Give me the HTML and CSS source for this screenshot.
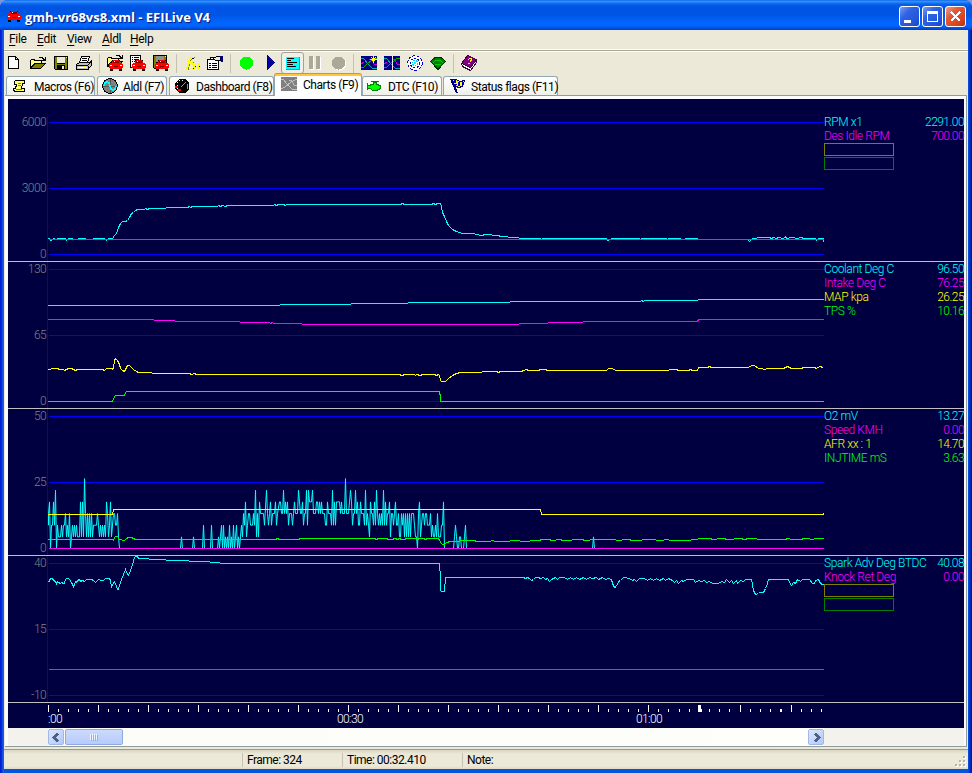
FILE: index.html
```
<!DOCTYPE html>
<html lang="en">
<head>
    <meta charset="UTF-8">
    <title>gmh-vr68vs8.xml - EFILive V4</title>
    <link rel="stylesheet" href="styles.css">
</head>
<body>

<svg class="defs" width="0" height="0">
    <symbol id="car" viewBox="0 0 14 11">
        <path fill="#000" d="M1 8h3v3h-3zM10 8h3v3h-3zM3 0h8v1h-8z"/>
        <path fill="#f00" d="M4 0h6v1h1v2h2v1h1v4h-1v1h-12v-1h-1v-4h1v-1h2v-2h1z"/>
        <path fill="#800000" d="M4 1h6v2h-6zM5 6h4v1h-4z"/>
        <path fill="#fff" d="M1 5h2v1h-2zM11 5h2v1h-2zM5 1h1v1h-1z"/>
    </symbol>
    <symbol id="folder" viewBox="0 0 16 16">
        <path fill="#000" d="M9 2h4v1h1v1h1v-2h1v4h-4v-1h1v-1h-1v-1h-3zM1 4h4v1h7v3h4v1h-1v1h-1v1h-1v1h-1v1h-1v1h-11v-9h1z"/>
        <path fill="#ffff80" d="M1 5h3v1h7v2h-7l-3 4z"/>
        <path fill="#808000" d="M5 9h9l-4 4h-9z"/>
    </symbol>
    <symbol id="disk" viewBox="0 0 16 16">
        <path fill="#000" d="M1 1h14v14h-13l-1-1z"/>
        <path fill="#808000" d="M2 2h2v7h8v-7h2v12h-12z"/>
        <path fill="#ece9d8" d="M4 2h8v6h-8zM13 2h1v1h-1z"/>
        <path fill="#000" d="M4 10h8v4h-8z"/>
        <path fill="#ece9d8" d="M9 11h2v3h-2z"/>
    </symbol>
    <symbol id="graph" viewBox="0 0 16 14">
        <path fill="#000080" d="M0 0h16v14h-16z"/>
        <path fill="none" stroke="#0aa" d="M0 2h2l2 2 2 3 3 3 2 2h5"/>
        <path fill="none" stroke="#0a0" d="M0 12l3-1 3-3 4-3 3-3 3 0"/>
        <path fill="none" stroke="#c0c" d="M8 3l3 1 2 4 3 1M0 8l3-2"/>
    </symbol>
</svg>

<div class="window">
    <div class="titlebar">
        <svg class="title-icon" width="14" height="11"><use href="#car"/></svg>
        <span class="title-text">gmh-vr68vs8.xml - EFILive V4</span>
        <div class="winbtn"><svg width="19" height="19"><path fill="#fff" d="M4 13h7v3H4z"/></svg></div>
        <div class="winbtn"><svg width="19" height="19"><path fill="#fff" fill-rule="evenodd" d="M4 4h11v11H4zM5 7h9v7H5z"/></svg></div>
        <div class="winbtn close"><svg width="19" height="19"><path stroke="#fff" stroke-width="2.3" d="M5 5l9 9M14 5l-9 9"/></svg></div>
    </div>

    <div class="client">
        <div class="menubar">
            <span class="m-file"><u>F</u>ile</span>
            <span class="m-edit"><u>E</u>dit</span>
            <span class="m-view"><u>V</u>iew</span>
            <span class="m-aldl"><u>A</u>ldl</span>
            <span class="m-help"><u>H</u>elp</span>
        </div>

        <div class="toolbar">
            <div class="tool"><svg width="16" height="16"><path fill="#fff" stroke="#000" d="M1.500 1.500h7l3 3v9h-10zM8.500 1.500v3h3"/></svg></div>
            <div class="tool"><svg width="16" height="16"><use href="#folder"/></svg></div>
            <div class="tool"><svg width="16" height="16"><use href="#disk"/></svg></div>
            <div class="tool"><svg width="16" height="16"><path fill="#fff" stroke="#000" d="M5.500 1.500h8l-2 6h-8z"/><path stroke="#000" d="M6 3.500h5M6 5.500h5"/><path fill="#c0c0c0" stroke="#000" d="M3.500 7.500h10l2-2v5l-4 4h-11v-5z"/><path stroke="#000" d="M1 10.500h11M12 10.500v4M12 10l3-3"/><path stroke="#fff" d="M2 12.500h9"/><path stroke="#ff0" d="M8 11.500h2"/></svg></div>
            <i class="sep"></i>
            <div class="tool"><svg width="16" height="16"><use href="#folder" y="-2" width="16" height="16"/><use href="#car" x="2" y="5" width="14" height="11"/></svg></div>
            <div class="tool"><svg width="16" height="16"><path fill="#fff" stroke="#000" d="M.5.5h10v12h-10z"/><path stroke="#000" d="M2 2.500h1M4 2.500h5M2 4.500h1M4 4.500h5M2 6.500h1M4 6.500h5"/><use href="#car" x="2" y="5" width="14" height="11"/></svg></div>
            <div class="tool"><svg width="16" height="16"><g transform="translate(-1 -1)"><use href="#disk" width="16" height="16"/></g><path fill="#909090" d="M3 1h8v6H3z"/><use href="#car" x="2" y="5" width="14" height="11"/></svg></div>
            <i class="sep"></i>
            <div class="tool"><svg width="16" height="16"><path fill="none" stroke="#808000" d="M2 14.500h2l3-10 2-2h2M5 7.500h5"/><path fill="none" stroke="#ff0" stroke-width="2" d="M2 13.500h1l3-10 2-1h2M4 7h5M9 9l2 5M11 9l-2 5M13 9h2l-1 3 1 1h-2"/><path stroke="#000" d="M8 3.500h2M11 11.500h1M15 11.500h1M9 13.500h1"/></svg></div>
            <div class="tool"><svg width="16" height="16"><path fill="#fff" stroke="#000" d="M.5 4.500h11v10H.5zM3.500 2.500h4v2h-4z"/><path stroke="#000" d="M2 8.500h2M5 8.500h5M2 10.500h2M5 10.500h5M2 12.500h2M5 12.500h5"/><path fill="#ece9d8" stroke="#000" d="M6.500 3.500l3-2h4v4h-5z"/><path fill="#000080" d="M13 1h3v6h-2z"/></svg></div>
            <i class="sep"></i>
            <div class="tool"><svg width="16" height="16"><circle cx="8.500" cy="8" r="6.500" fill="#0f0"/></svg></div>
            <div class="tool"><svg width="16" height="16"><path fill="#00f" stroke="#000080" d="M6.500.5v14l7-7z"/><path fill="#0000a0" d="M7 2v11l5-5.500z"/></svg></div>
            <div class="tool pressed"><svg width="16" height="16"><path fill="#0ff" d="M2 2h13v12H2z"/><path fill="none" stroke="#808080" d="M2 14.500h13.500V2"/><path stroke="#000" d="M3 3.500h7M3 5.500h4M3 7.500h10M3 9.500h6M3 11.500h9"/></svg></div>
            <div class="tool"><svg width="16" height="16"><path fill="#fff" d="M3 2h4v13H3zM10 2h4v13h-4z"/><path fill="#aca899" d="M2 1h4v13H2zM9 1h4v13H9z"/></svg></div>
            <div class="tool"><svg width="16" height="16"><circle cx="9.500" cy="9" r="6.500" fill="#fff"/><circle cx="8.500" cy="8" r="6.500" fill="#aca899"/></svg></div>
            <i class="sep"></i>
            <div class="tool"><svg width="16" height="16"><use href="#graph" y="1" width="16" height="14"/><path stroke="#ff0" d="M12.500 1v7M9 4.500h7M10.500 2.500l4 4M14.500 2.500l-4 4"/><path fill="#fff" d="M12 4h1v1h-1z"/></svg></div>
            <div class="tool"><svg width="16" height="16"><use href="#graph" y="1" width="16" height="14"/><path stroke="#ece9d8" d="M8.500 1v14"/></svg></div>
            <div class="tool"><svg width="16" height="16"><g fill="none" stroke="#0000c0"><circle cx="8" cy="8" r="7.300" fill="#fff" stroke-dasharray="3 1.500"/><circle cx="8" cy="8" r="4.800" stroke-dasharray="2 1.500"/><circle cx="8" cy="8" r="2.500" stroke="#0cf" stroke-dasharray="1.500 1"/></g><path fill="#0ff" d="M7 7h2v2H7z"/></svg></div>
            <div class="tool"><svg width="16" height="16"><path fill="#008000" stroke="#003000" d="M.5 6.500l3-3 3-1.500h3l3 1.500 3 3-7.500 8z"/><path fill="none" stroke="#0c0" d="M3 7.500l3-2h4l3 2M5.500 10l2-1h1l2 1"/></svg></div>
            <i class="sep"></i>
            <div class="tool"><svg width="16" height="16"><path fill="#800080" stroke="#400040" d="M6.500.5l9 4-6 8-9-4z"/><path fill="#fff" stroke="#400040" d="M.5 8.500l9 4 6-8v3l-6 8-8-4z"/><path fill="none" stroke="#ff0" stroke-width="1.200" d="M7 5l2-2 2 1-2 3M8 8v1"/></svg></div>
        </div>

        <div class="tabs">
            <div class="tab t-macros"><svg width="16" height="16"><path fill="#ffff60" stroke="#000" d="M3.500 2.500h9v3h-2l-1 5h3v3h-9l-2-1v-2h2l1-4h-2v-3z"/><path stroke="#808000" d="M6 5.500h3M6 7.500h3M4 11.500h6"/></svg><span>Macros (F6)</span></div>
            <div class="tab t-aldl"><svg width="16" height="16"><circle cx="8" cy="8" r="7.300" fill="#808080" stroke="#000"/><path stroke="#555" d="M1 8h14M8 1v14"/><path fill="none" stroke="#0ff" stroke-width="1.400" d="M2 8l1-3 2-1 2 1 2 6 2 1 2-1 1-3"/></svg><span>Aldl (F7)</span></div>
            <div class="tab t-dash"><svg width="16" height="16"><path fill="#000" d="M5 1h6l4 4v6l-4 4H5l-4-4V5z"/><path fill="none" stroke="#fff" stroke-dasharray="1 2" d="M3 11V5l3-3h4"/><path fill="none" stroke="#0f0" d="M12 4L7 9M13 6v5"/><path stroke="#f00" stroke-width="2" d="M1 9h3M4 12h3"/></svg><span>Dashboard (F8)</span></div>
            <div class="tab t-charts active"><svg width="16" height="16"><path fill="#808080" d="M0 0h16v14H0z"/><path fill="none" stroke="#c0c0c0" d="M0 2h2l4 5 5 5h5M0 12l4-2 6-5 6-3M8 3l3 1 2 4 3 1"/></svg><span>Charts (F9)</span></div>
            <div class="tab t-dtc"><svg width="16" height="16"><path fill="#0f0" stroke="#008000" d="M4.500 6.500h3v-2h3v2l4 1v3l-4 2h-4l-2-2h-3v-3h3z"/><path stroke="#008000" d="M5 3.500h8M1.500 5v7"/></svg><span>DTC (F10)</span></div>
            <div class="tab t-flags"><svg width="16" height="16"><path fill="#ff0" stroke="#000080" d="M2.500 1.500h4l3 2 5-1-2 6-4 1-4-2z"/><path fill="#0000c0" d="M4 2h2v3H4zM8 4h2v4H8zM12 3h1v4h-1zM5 6h2v1H5z"/><path stroke="#000080" stroke-width="2" d="M1 1l6 14"/></svg><span>Status flags (F11)</span></div>
        </div>

        <div class="page">
            <!-- RPM -->
            <div class="panel first">
                <svg class="plot" width="816" height="162" viewBox="8 99 816 162">
                    <g transform="translate(.5 .5)">
                        <path class="axis" d="M47 115V261"/>
                        <path class="grid" d="M48 122H824M48 188H824M48 254H824"/>
                        <polyline class="cyan" points="47.500,238 49,238 50,240 52,239 53,238 56,239 58,238 65,238 66,240 68,238 77,239 79,238 91,239 94,238 104,238 106,240 108,238 112,238 114,235 116,233 118,227 120,223 122,221 125,221 127,220 129,217 131,213 133,212 135,210 137,209 144,209 145,208 147,209 149,208 165,208 166,207 187,207 189,206 190,207 192,206 195,206 196,206 217,206 218,205 220,206 222,205 225,206 227,205 237,205 238,205 273,205 274,204 276,205 278,204 283,204 285,205 286,204 400,204 402,203 404,204 431,204 433,203 435,204 437,203 440,203 441,206 442,212 444,216 446,221 448,225 450,227 452,229 456,231 462,233 474,233 475,234 482,235 484,234 498,235 500,236 507,236 508,237 518,237 519,238 540,238 541,239 543,238 606,238 607,240 609,239 612,238 638,238 640,239 642,238 665,238 667,239 669,238 678,238 683,239 687,238 697,238 698,239 747,239 748,240 749,241 750,240 751,239 753,238 756,238 757,237 769,237 771,238 773,237 776,238 778,237 783,238 785,236 786,238 791,237 797,238 800,237 804,238 815,238 816,240 818,238 823,238 823,241"/>
                        <path class="magenta" d="M48 239H824"/>
                    </g>
                    <g class="scale"><text x="46" y="126">6000</text><text x="46" y="192">3000</text><text x="46" y="258">0</text></g>
                </svg>
                <div class="legend">
                    <div class="row c-cyan"><span>RPM x1</span><b>2291.00</b></div>
                    <div class="row c-magenta"><span>Des Idle RPM</span><b>700.00</b></div>
                    <div class="slot olive"></div>
                    <div class="slot green"></div>
                </div>
            </div>
            <!-- temperatures, MAP, TPS -->
            <div class="panel">
                <svg class="plot" width="816" height="146" viewBox="8 262 816 146">
                    <g transform="translate(.5 .5)">
                        <path class="axis" d="M47 261V408"/>
                        <path class="grid" d="M48 269H824M48 335H824M48 401H824"/>
                        <polyline class="cyan" points="47.500,305 279,305 280,304 350,304 351,303 407,303 408,302 509,302 510,301 640,301 641,300 643,301 644,300 697,300 698,299 823.500,299"/>
                        <polyline class="magenta" points="47.500,319 153,319 154,320 174,320 175,321 239,321 240,322 269,322 270,323 272,322 273,323 301,323 302,324 518,324 519,323 547,323 548,322 582,322 583,321 697,321 698,319 823.500,319"/>
                        <polyline class="yellow" points="47.500,369 50,369 51,368 57,368 59,369 63,369 64,370 66,369 68,368 71,368 73,369 75,370 77,369 102,369 104,370 106,368 111,368 112,369 113,367 114,360 115,358 117,360 119,364 120,368 122,370 124,371 126,367 127,365 129,365 131,367 133,369 136,371 138,372 151,372 152,373 189,373 191,374 194,373 196,374 399,374 401,375 405,374 414,374 415,375 416,374 420,375 422,374 434,374 436,375 438,374 439,375 440,380 441,381 445,381 448,378 452,375 456,373 460,372 481,372 482,371 496,371 498,372 500,371 521,371 523,370 526,369 528,370 538,370 540,369 545,369 547,370 606,370 608,368 612,368 615,370 667,370 670,369 676,369 678,370 688,370 690,369 692,370 697,370 698,367 707,367 709,366 711,367 748,367 751,365 754,365 758,368 761,368 764,369 767,368 783,368 787,366 791,368 801,368 803,367 814,367 816,368 819,366 823,367"/>
                        <polyline class="lime" points="47.500,401 112,401 113,398 115,395 124,395 125,392 126,391 439,391 440,397 440,401 823.500,401"/>
                    </g>
                    <g class="scale"><text x="46" y="273">130</text><text x="46" y="339">65</text><text x="46" y="405">0</text></g>
                </svg>
                <div class="legend">
                    <div class="row c-cyan"><span>Coolant Deg C</span><b>96.50</b></div>
                    <div class="row c-magenta"><span>Intake Deg C</span><b>76.25</b></div>
                    <div class="row c-yellow"><span>MAP kpa</span><b>26.25</b></div>
                    <div class="row c-lime"><span>TPS %</span><b>10.16</b></div>
                </div>
            </div>
            <!-- O2, speed, AFR, injector time -->
            <div class="panel">
                <svg class="plot" width="816" height="146" viewBox="8 409 816 146">
                    <g transform="translate(.5 .5)">
                        <path class="axis" d="M47 408V555"/>
                        <path class="grid" d="M48 416H824M48 482H824M48 548H824"/>
                        <!-- O2 is quantised, so y is the step number here -->
                        <polyline class="cyan" transform="translate(0 548) scale(1 -11.65)" points="48,2 48,3 49,4 50,0 51,2 52,2 53,4 54,2 55,5 56,0 57,2 58,1 60,1 61,2 62,1 63,2 64,2 65,3 66,1 67,2 68,1 69,3 70,0 71,1 72,2 73,1 74,2 75,1 76,2 77,1 79,1 80,4 81,1 82,4 83,1 84,6 85,3 86,1 87,3 88,1 89,3 90,1 91,3 92,1 93,2 96,2 97,3 98,2 99,1 100,2 101,1 102,2 103,1 104,2 105,1 106,4 107,3 108,1 109,2 110,4 111,1 113,3 114,3 115,2 116,2 117,3 118,1 119,0 180,0 181,1 182,0 192,0 193,1 194,0 202,0 203,2 204,0 210,0 211,2 212,0 217,0 218,1 219,0 220,1 221,2 222,0 223,2 224,0 225,1 226,0 227,1 228,0 229,2 230,0 231,1 232,0 233,2 234,0 235,1 236,2 237,0 238,1 239,0 240,1 241,2 242,1 243,3 244,2 245,4 246,1 247,2 248,3 249,3 250,2 252,2 253,3 254,2 255,5 256,1 257,3 258,1 259,4 260,3 263,3 264,2 266,5 267,3 268,2 269,3 270,4 271,2 272,3 274,3 275,4 276,2 277,3 279,4 280,4 281,3 282,3 283,5 284,3 285,4 286,3 287,4 288,2 289,3 291,3 292,2 293,3 294,4 295,3 297,3 298,5 299,4 300,3 301,3 302,4 303,2 304,3 305,3 306,5 307,2 308,5 309,4 311,4 312,5 313,3 315,3 316,4 317,4 318,3 319,4 320,3 321,4 322,3 324,3 325,2 326,2 327,4 328,3 330,3 331,2 332,5 333,2 334,4 335,2 336,4 339,4 340,3 341,4 342,3 344,3 345,6 346,3 348,3 349,4 350,5 351,4 352,2 353,3 354,3 355,5 356,3 357,4 358,2 359,2 360,4 361,3 363,3 364,2 365,5 366,2 367,3 368,2 369,1 370,4 371,3 372,3 373,2 374,4 375,2 376,5 377,3 378,2 379,3 380,2 381,3 382,2 383,5 384,2 385,4 386,2 387,3 388,3 389,4 390,1 391,3 392,3 393,2 394,3 395,4 396,2 397,2 398,3 399,1 400,1 401,3 402,2 403,3 404,1 405,3 406,1 407,3 408,1 409,3 410,1 411,3 413,3 414,2 415,1 416,1 417,0 418,3 419,4 420,1 421,2 422,3 423,3 424,2 425,3 426,3 427,2 429,2 430,3 431,1 432,2 433,1 434,1 435,2 436,1 437,3 438,1 440,1 441,2 442,2 443,4 444,0 453,0 454,1 455,2 456,1 457,0 458,0 459,1 460,1 461,0 463,0 464,1 465,2 466,0 592,0 593,1 594,0 823,0"/>
                        <polyline class="yellow" points="47.500,514 112,514 113,509 540,509 541,514 823,514 823,512"/>
                        <polyline class="lime" points="47.500,539 112,539 113,540 114,537 115,536 117,536 119,539 121,539 122,540 124,540 126,538 128,537 131,537 135,539 275,539 277,538 279,539 298,539 300,538 374,538 376,539 378,538 386,538 388,539 391,539 395,538 397,539 399,538 401,539 404,539 406,538 415,538 417,539 419,538 423,538 425,539 427,538 437,538 439,539 440,542 442,544 444,544 446,542 450,541 455,541 464,540 474,540 476,541 489,541 492,540 495,541 508,541 511,540 518,540 521,541 539,540 541,539 549,539 551,540 560,539 562,540 582,539 584,540 596,539 614,539 617,540 627,539 633,540 650,539 660,540 667,539 670,540 684,540 697,539 698,538 710,538 712,539 722,538 728,539 740,538 744,539 748,538 756,538 757,539 784,539 788,538 791,539 801,539 803,538 808,538 811,539 816,538 823,538"/>
                        <path class="magenta" d="M48 548H824"/>
                    </g>
                    <g class="scale"><text x="46" y="420">50</text><text x="46" y="486">25</text><text x="46" y="552">0</text></g>
                </svg>
                <div class="legend">
                    <div class="row c-cyan"><span>O2 mV</span><b>13.27</b></div>
                    <div class="row c-magenta"><span>Speed KMH</span><b>0.00</b></div>
                    <div class="row c-yellow"><span>AFR xx : 1</span><b>14.70</b></div>
                    <div class="row c-lime"><span>INJTIME mS</span><b>3.63</b></div>
                </div>
            </div>
            <!-- spark and knock -->
            <div class="panel">
                <svg class="plot" width="816" height="146" viewBox="8 556 816 146">
                    <g transform="translate(.5 .5)">
                        <path class="axis" d="M47 555V702"/>
                        <path class="grid" d="M48 563H824M48 629H824M48 695H824"/>
                        <polyline class="cyan" points="48,582 49,580 50,578 52,578 53,580 55,581 56,583 57,581 58,582 60,583 61,582 63,583 64,583 65,579 66,578 68,578 69,579 71,582 72,584 73,586 74,584 75,581 76,582 77,580 79,579 80,581 82,580 84,581 86,579 91,579 93,580 95,582 96,581 98,579 101,580 103,580 105,578 109,578 110,580 111,586 112,584 114,581 116,586 117,589 118,589 119,585 121,579 123,574 125,569 127,574 128,575 130,570 132,564 134,557 135,556 137,556 138,558 148,558 149,559 165,559 166,560 188,560 189,561 209,561 210,562 219,562 220,563 439,563 440,577 440,590 441,591 444,591 444,584 445,583 445,577 523,577 525,578 527,577 529,578 531,580 533,579 535,577 538,577 540,578 543,577 545,579 547,578 549,581 551,579 553,578 555,577 557,579 559,577 564,577 567,579 570,577 573,579 576,577 579,579 583,577 586,579 589,577 592,578 596,577 598,579 602,577 605,579 608,578 611,579 612,583 614,587 616,586 618,581 620,580 623,577 629,578 632,580 634,579 636,581 639,578 644,578 647,580 650,578 653,580 656,578 659,580 663,578 665,580 668,578 672,580 674,582 676,580 678,583 681,580 683,581 686,579 693,579 695,582 698,580 701,581 704,580 706,582 709,581 712,583 718,583 721,581 724,582 726,579 729,582 731,580 733,583 736,580 737,583 740,580 743,581 745,579 751,579 752,584 753,590 755,594 758,593 759,592 763,592 765,588 767,583 768,579 788,579 789,582 791,585 793,582 795,583 797,579 800,581 802,579 809,579 812,583 814,583 815,580 818,579 820,583 822,584 823,584"/>
                        <path class="magenta" d="M48 669H824"/>
                    </g>
                    <g class="scale"><text x="46" y="567">40</text><text x="46" y="633">15</text><text x="46" y="699">-10</text></g>
                </svg>
                <div class="legend">
                    <div class="row c-cyan"><span>Spark Adv Deg BTDC</span><b>40.08</b></div>
                    <div class="row c-magenta"><span>Knock Ret Deg</span><b>0.00</b></div>
                    <div class="slot olive"></div>
                    <div class="slot green"></div>
                </div>
            </div>
            <svg class="timeline" width="956" height="25" viewBox="8 703 956 25">
                <g stroke="#fff">
                    <path stroke-width="3" stroke-dasharray="1 9" d="M48 710.500H640M658 710.500h12M679 710.500h12M709 710.500H732M750 710.500H781M781 710.500h2M801 710.500H822"/>
                    <path stroke-width="7" stroke-dasharray="1 49" d="M48 708.500H649M740 708.500h2M791 708.500h2"/>
                </g>
                <path fill="#fff" d="M698 705h3v4h1v3h-4z"/>
                <g class="time"><text x="48" y="723">:00</text><text x="337" y="723">00:30</text><text x="636" y="723">01:00</text></g>
            </svg>
            <div class="scrollbar">
                <div class="sb-btn"><svg width="15" height="15"><path fill="none" stroke="#4d6185" stroke-width="2.200" d="M9 3.500l-4 4 4 4"/></svg></div>
                <div class="thumb"><i></i><i></i><i></i><i></i></div>
                <div class="sb-btn right"><svg width="15" height="15"><path fill="none" stroke="#4d6185" stroke-width="2.200" d="M6 3.500l4 4-4 4"/></svg></div>
            </div>
        </div>

        <div class="statusbar">
            <div class="s-blank"></div>
            <div class="s-frame">Frame: 324</div>
            <div class="s-time">Time: 00:32.410</div>
            <div class="s-note">Note:</div>
            <svg class="grip" width="12" height="12"><path fill="#fff" d="M9 1h2v2H9zM5 5h2v2H5zM9 5h2v2H9zM1 9h2v2H1zM5 9h2v2H5zM9 9h2v2H9z"/><path fill="#b8b4a2" d="M8 0h2v2H8zM4 4h2v2H4zM8 4h2v2H8zM0 8h2v2H0zM4 8h2v2H4zM8 8h2v2H8z"/></svg>
        </div>
    </div>
</div>

</body>
</html>
```
FILE: styles.css
```
* {
    box-sizing: border-box;
}

body {
    margin: 0;
    background: #7a96df;
    font-family: Roboto, "Liberation Sans", sans-serif;
    font-size: 12px;
    color: #000;
}

svg {
    display: block;
    shape-rendering: crispEdges;
}

.defs {
    position: absolute;
}

.window {
    width: 972px;
    height: 773px;
    overflow: hidden;
    border-radius: 8px 8px 0 0;
    background: linear-gradient(90deg, #0019cf 0, #0831d9 2px, #166aee 3px, #0855dd 4px, #0855dd 968px, #0040e0 969px, #001ea0 971px);
}

/* title bar */
.titlebar {
    display: flex;
    align-items: center;
    height: 30px;
    padding: 3px 6px 0 7px;
    background: linear-gradient(#0058e6 0, #3a93ff 1px, #2a8af8 2px, #0a62ee 4px, #0054e3 7px, #0055e5 15px, #0064fb 21px, #0066ff 26px, #0050e0 28px, #0040c8 30px);
}

.title-icon {
    margin-right: 4px;
}

.title-text {
    flex: 1;
    font-family: "Open Sans", "Noto Sans", sans-serif;
    font-size: 13px;
    font-weight: bold;
    letter-spacing: -0.02px;
    color: #fff;
    text-shadow: 1px 1px 1px #0a1883;
    white-space: nowrap;
}

.winbtn {
    width: 21px;
    height: 21px;
    margin-left: 2px;
    border: 1px solid #fff;
    border-radius: 3px;
    background: linear-gradient(135deg, #7a9cf0 0, #2f62e4 35%, #2358dc 70%, #1a45c0 100%);
}

.winbtn.close {
    background: linear-gradient(135deg, #f0a088 0, #e2583a 35%, #d8431c 75%, #b03010 100%);
}

/* inside the frame */
.client {
    height: 739px;
    margin: 0 4px;
    background: #ece9d8;
}

.menubar {
    display: flex;
    height: 22px;
    padding: 2px 0 0 5px;
    line-height: 15px;
    letter-spacing: -0.3px;
    border-bottom: 1px solid #fff;
    box-shadow: inset 0 -1px #aca899, inset 0 -2px #fff;
}

.menubar u {
    text-underline-offset: 2px;
}

.m-file { width: 28px; }
.m-edit { width: 30px; }
.m-view { width: 35px; }
.m-aldl { width: 28px; }

.toolbar {
    display: flex;
    height: 23px;
}

.tool {
    width: 23px;
    height: 22px;
    padding: 3px 0 0 3px;
}

.tool.pressed {
    width: 23px;
    padding: 2px 0 0 2px;
    border: 1px solid #a5a295;
    border-radius: 3px;
    background: #f0efe8;
}

.sep {
    width: 1px;
    height: 19px;
    margin: 2px 4px 0 3px;
    background: #c5c2b3;
}

/* tabs */
.tabs {
    display: flex;
    align-items: flex-end;
    height: 20px;
    padding-left: 2px;
    letter-spacing: -0.45px;
}

.tab {
    display: flex;
    align-items: center;
    height: 19px;
    border: 1px solid #91a7b4;
    border-bottom: 0;
    border-radius: 3px 3px 0 0;
    background: linear-gradient(#fff, #f0f0ea);
    white-space: nowrap;
}

.tab span {
    padding-top: 1px;
}

.tab.active span {
    padding-top: 0;
}

.tab svg {
    flex: none;
}

.t-macros { width: 89px; padding-left: 5px; margin-right: 2px; }
.t-macros svg { margin-right: 6px; }
.t-aldl { width: 70px; padding-left: 4px; margin-right: 2px; }
.t-aldl svg { margin-right: 5px; }
.t-dash { width: 105px; padding-left: 4px; }
.t-dash svg { margin-right: 6px; }
.t-charts { width: 88px; padding-left: 6px; }
.t-charts svg { margin-right: 6px; }
.t-dtc { width: 80px; padding-left: 3px; margin-right: 1px; }
.t-dtc svg { margin-right: 6px; }
.t-flags { width: 115px; padding-left: 6px; }
.t-flags svg { margin-right: 5px; }

.tab.active {
    position: relative;
    height: 22px;
    margin-bottom: -1px;
    padding-bottom: 2px;
    border-top: 2px solid #ffc73c;
    box-shadow: 0 -1px #e68b2c;
    background: #fff;
}

/* chart page */
.page {
    width: 962px;
    height: 652px;
    padding: 3px 1px 0 3px;
    border: 1px solid #919b9c;
    border-left: 0;
    background: #fcfcfe;
    margin-left: 1px;
}

.panel {
    display: flex;
    width: 956px;
    height: 147px;
    background: #000040;
    border-bottom: 1px solid #c0c0c0;
}

.panel.first {
    height: 163px;
}

.axis {
    stroke: #0000d0;
}

.grid {
    stroke: #00f;
}

polyline {
    fill: none;
    vector-effect: non-scaling-stroke;
}

.cyan { stroke: #0ff; }
.magenta { stroke: #f0f; }
.yellow { stroke: #ff0; }
.lime { stroke: #0f0; }

.scale text {
    fill: #808080;
    text-anchor: end;
    font-weight: 300;
    letter-spacing: -0.6px;
}

.legend {
    width: 140px;
    font-weight: 300;
    letter-spacing: -0.4px;
}

.panel.first .legend {
    padding-top: 16px;
}

.row {
    display: flex;
    justify-content: space-between;
    height: 14px;
    line-height: 14px;
    white-space: nowrap;
}

.row b {
    font-weight: inherit;
    letter-spacing: -0.55px;
}

.c-cyan { color: #0ff; }
.c-magenta { color: #f0f; }
.c-yellow { color: #ff0; }
.c-lime { color: #0f0; }

.slot {
    width: 70px;
    height: 13px;
    margin-bottom: 1px;
    border: 1px solid #808000;
}

.slot.green {
    border-color: #008000;
}

.timeline {
    background: #000040;
}

.time text {
    fill: #fff;
    font-weight: 300;
    letter-spacing: -0.6px;
}

/* scroll bar */
.scrollbar {
    display: flex;
    width: 956px;
    height: 18px;
    padding: 1px 140px 0 40px;
    background: linear-gradient(90deg, #f3f2ec 40px, #fbfbf8 40px, #fefefb 816px, #f3f2ec 816px);
}

.sb-btn {
    width: 16px;
    height: 16px;
    border: 1px solid #9db8ee;
    border-radius: 2px;
    background: linear-gradient(135deg, #dce6ff, #b4c8f6);
}

.sb-btn.right {
    margin-left: auto;
}

.thumb {
    display: flex;
    justify-content: center;
    width: 58px;
    height: 16px;
    margin-left: 1px;
    padding-top: 4px;
    border: 1px solid #8eaae4;
    border-radius: 2px;
    background: linear-gradient(#cbdafd, #b7cbfb);
}

.thumb i {
    width: 1px;
    height: 6px;
    margin-right: 1px;
    background: #eef4fe;
    box-shadow: 1px 1px #8cb0f8;
}

/* status bar */
.statusbar {
    display: flex;
    position: relative;
    height: 20px;
    margin-top: 2px;
    padding-top: 3px;
    border-top: 1px solid #9d9a8b;
    background: linear-gradient(#d8d5c4 0, #ece9d8 4px, #ece9d8 16px, #dedac8 100%);
}

.statusbar div {
    height: 14px;
    line-height: 14px;
    padding-left: 4px;
    border-left: 1px solid #c5c2b3;
    white-space: nowrap;
    letter-spacing: -0.5px;
}

.statusbar .s-blank {
    width: 238px;
    border: 0;
}

.s-frame { width: 100px; }
.s-time { width: 120px; }

.grip {
    position: absolute;
    right: 1px;
    bottom: 1px;
}
```
